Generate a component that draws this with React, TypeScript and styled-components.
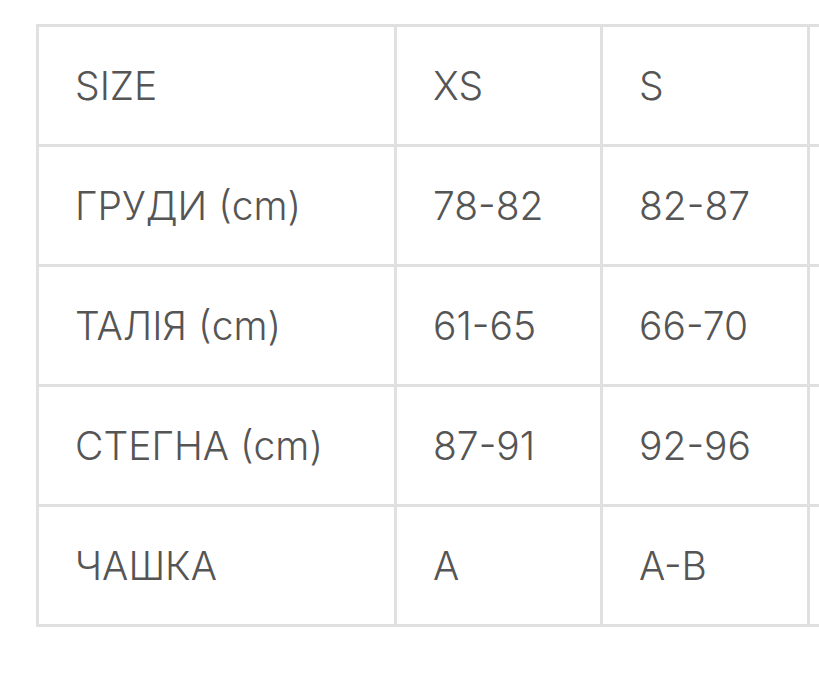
import { createGlobalStyle, styled } from "styled-components";

const GlobalStyle = createGlobalStyle`
  html, body {
    margin: 0;
    padding: 0;
    background: #ffffff;
    overflow: hidden;
  }
  body {
    font-family: Inter, "Noto Sans", "DejaVu Sans", sans-serif;
  }
`;

const Page = styled.div`
  padding: 24px 0 0 36px;
`;

const Grid = styled.div`
  display: grid;
  grid-template-columns: 355px 203px 204px 204px;
  grid-auto-rows: 117px;
  gap: 3px;
  padding: 3px;
  background: #e0e0e0;
  width: max-content;
`;

const Cell = styled.div`
  background: #ffffff;
  display: flex;
  align-items: center;
  padding-left: 36px;
  color: #555555;
  font-size: 39px;
  font-weight: 300;
  white-space: nowrap;
`;

const rows: string[][] = [
  ["SIZE", "XS", "S", ""],
  ["ГРУДИ (cm)", "78-82", "82-87", ""],
  ["ТАЛІЯ (cm)", "61-65", "66-70", ""],
  ["СТЕГНА (cm)", "87-91", "92-96", ""],
  ["ЧАШКА", "A", "A-B", ""],
];

function App() {
  return (
    <Page>
      <GlobalStyle />
      <Grid>
        {rows.map((row, i) =>
          row.map((cell, j) => <Cell key={`${i}-${j}`}>{cell}</Cell>)
        )}
      </Grid>
    </Page>
  );
}

export default App;
